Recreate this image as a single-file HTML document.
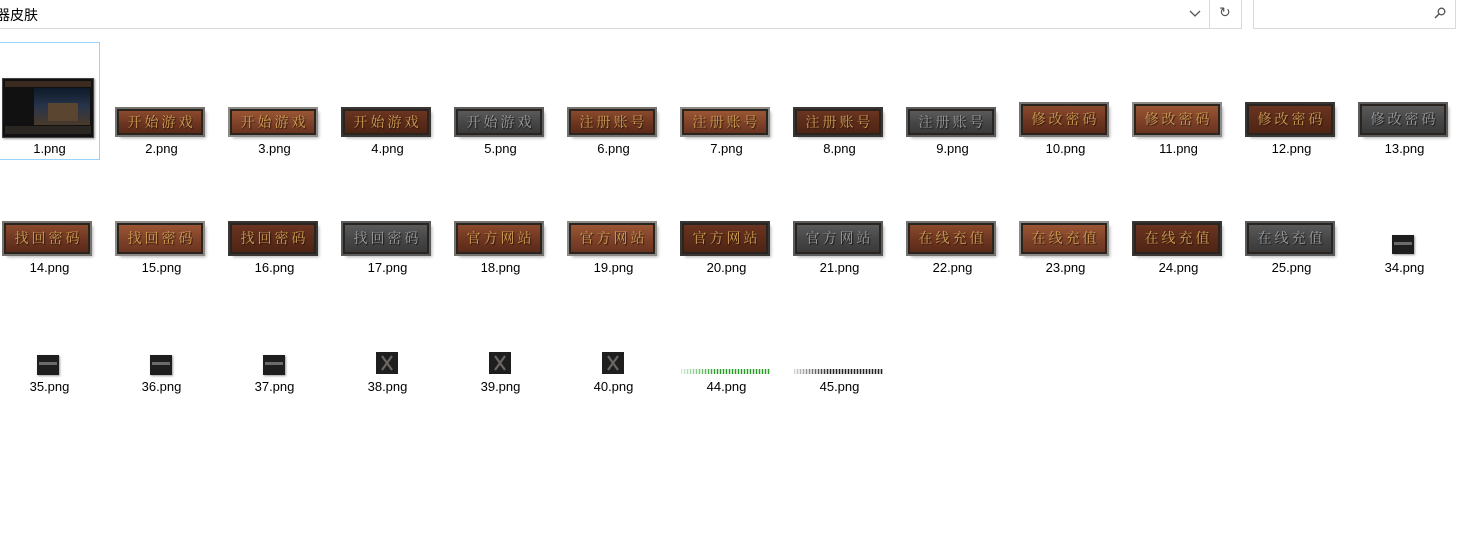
<!DOCTYPE html>
<html><head><meta charset="utf-8"><style>
body{margin:0;width:1461px;height:548px;background:#fff;position:relative;overflow:hidden;font-family:"Liberation Sans","Noto Sans CJK SC",sans-serif;}
.a{position:absolute}
.lbl{position:absolute;width:113px;text-align:center;font-size:13px;color:#000;line-height:14px}
.b{position:absolute;width:86px;box-sizing:border-box;border:2px solid #2a2420;outline:2px solid #76726e;box-shadow:3px 3px 3px rgba(0,0,0,.3);background:linear-gradient(#8a4a2c,#6b3420 60%,#5a2a18);color:#cf9f55;font-family:"Noto Serif CJK SC","Noto Sans CJK SC",serif;font-size:14px;text-align:center;letter-spacing:3px;text-indent:3px;text-shadow:1px 1px 1px #2a1408}
.b.h{background:linear-gradient(#9a5634,#7c4028 60%,#6a3420);outline-color:#8e8a86}
.b.d{background:linear-gradient(#6a3420,#4e2414);outline-color:#3a3634}
.b.g{background:linear-gradient(#5a5a5a,#444 60%,#3a3a3a);color:#9c9c9c;outline-color:#5c5c5c;text-shadow:1px 1px 1px #111}
.sm{position:absolute;width:22px;height:22px;background:#1e1e1e;box-shadow:1px 1px 2px rgba(0,0,0,.4)}
.sm i{position:absolute;left:2px;right:2px;top:9px;height:3px;background:#6a6a6a}
</style></head><body>
<div class="a" style="left:0;top:0;width:1241px;height:28px;border-bottom:1px solid #d9d9d9;border-right:1px solid #d9d9d9"></div>
<div class="a" style="left:-4px;top:5px;font-size:14px">器皮肤</div>
<div class="a" style="left:1209px;top:0;width:1px;height:28px;background:#d9d9d9"></div>
<svg class="a" style="left:1189px;top:10px" width="12" height="8"><path d="M1 1l5 5 5-5" stroke="#555" fill="none" stroke-width="1.3"/></svg>
<div class="a" style="left:1219px;top:4px;font-size:14px;color:#555">↻</div>
<div class="a" style="left:1253px;top:0;height:28px;border:1px solid #d9d9d9;border-top:none;width:201px"></div>
<svg class="a" style="left:1434px;top:7px" width="12" height="13"><circle cx="7.5" cy="4.5" r="3.3" stroke="#555" fill="none" stroke-width="1.3"/><path d="M5 7l-4 4" stroke="#555" stroke-width="1.5"/></svg>

<div class="a" style="left:0;top:42px;width:99px;height:116px;border:1px solid #99d1ff;border-left:none"></div>
<div class="a" style="left:2px;top:78px;width:90px;height:58px;background:#111;border:1px solid #444;box-shadow:1px 1px 2px rgba(0,0,0,.4)">
<div class="a" style="left:2px;top:2px;width:86px;height:6px;background:#3a2a20"></div>
<div class="a" style="left:31px;top:9px;width:56px;height:37px;background:linear-gradient(#0c1a2a,#28344a 50%,#4a3a2a)"></div>
<div class="a" style="left:45px;top:24px;width:30px;height:18px;background:#5a4630"></div>
<div class="a" style="left:2px;top:47px;width:86px;height:8px;background:#2a2622"></div>
</div>
<div class="lbl" style="left:-7px;top:142px">1.png</div>

<div class="b" style="left:117px;top:109px;height:26px;line-height:22px">开始游戏</div><div class="lbl" style="left:105px;top:142px">2.png</div>
<div class="b h" style="left:230px;top:109px;height:26px;line-height:22px">开始游戏</div><div class="lbl" style="left:218px;top:142px">3.png</div>
<div class="b d" style="left:343px;top:109px;height:26px;line-height:22px">开始游戏</div><div class="lbl" style="left:331px;top:142px">4.png</div>
<div class="b g" style="left:456px;top:109px;height:26px;line-height:22px">开始游戏</div><div class="lbl" style="left:444px;top:142px">5.png</div>
<div class="b" style="left:569px;top:109px;height:26px;line-height:22px">注册账号</div><div class="lbl" style="left:557px;top:142px">6.png</div>
<div class="b h" style="left:682px;top:109px;height:26px;line-height:22px">注册账号</div><div class="lbl" style="left:670px;top:142px">7.png</div>
<div class="b d" style="left:795px;top:109px;height:26px;line-height:22px">注册账号</div><div class="lbl" style="left:783px;top:142px">8.png</div>
<div class="b g" style="left:908px;top:109px;height:26px;line-height:22px">注册账号</div><div class="lbl" style="left:896px;top:142px">9.png</div>
<div class="b" style="left:1021px;top:104px;height:31px;line-height:27px">修改密码</div><div class="lbl" style="left:1009px;top:142px">10.png</div>
<div class="b h" style="left:1134px;top:104px;height:31px;line-height:27px">修改密码</div><div class="lbl" style="left:1122px;top:142px">11.png</div>
<div class="b d" style="left:1247px;top:104px;height:31px;line-height:27px">修改密码</div><div class="lbl" style="left:1235px;top:142px">12.png</div>
<div class="b g" style="left:1360px;top:104px;height:31px;line-height:27px">修改密码</div><div class="lbl" style="left:1348px;top:142px">13.png</div>

<div class="b" style="left:4px;top:223px;height:31px;line-height:27px">找回密码</div><div class="lbl" style="left:-7px;top:261px">14.png</div>
<div class="b h" style="left:117px;top:223px;height:31px;line-height:27px">找回密码</div><div class="lbl" style="left:105px;top:261px">15.png</div>
<div class="b d" style="left:230px;top:223px;height:31px;line-height:27px">找回密码</div><div class="lbl" style="left:218px;top:261px">16.png</div>
<div class="b g" style="left:343px;top:223px;height:31px;line-height:27px">找回密码</div><div class="lbl" style="left:331px;top:261px">17.png</div>
<div class="b" style="left:456px;top:223px;height:31px;line-height:27px">官方网站</div><div class="lbl" style="left:444px;top:261px">18.png</div>
<div class="b h" style="left:569px;top:223px;height:31px;line-height:27px">官方网站</div><div class="lbl" style="left:557px;top:261px">19.png</div>
<div class="b d" style="left:682px;top:223px;height:31px;line-height:27px">官方网站</div><div class="lbl" style="left:670px;top:261px">20.png</div>
<div class="b g" style="left:795px;top:223px;height:31px;line-height:27px">官方网站</div><div class="lbl" style="left:783px;top:261px">21.png</div>
<div class="b" style="left:908px;top:223px;height:31px;line-height:27px">在线充值</div><div class="lbl" style="left:896px;top:261px">22.png</div>
<div class="b h" style="left:1021px;top:223px;height:31px;line-height:27px">在线充值</div><div class="lbl" style="left:1009px;top:261px">23.png</div>
<div class="b d" style="left:1134px;top:223px;height:31px;line-height:27px">在线充值</div><div class="lbl" style="left:1122px;top:261px">24.png</div>
<div class="b g" style="left:1247px;top:223px;height:31px;line-height:27px">在线充值</div><div class="lbl" style="left:1235px;top:261px">25.png</div>
<div class="sm" style="left:1392px;top:235px;height:19px"><i style="top:7px"></i></div><div class="lbl" style="left:1348px;top:261px">34.png</div>

<div class="sm" style="left:37px;top:355px;height:20px"><i style="top:7px"></i></div><div class="lbl" style="left:-7px;top:380px">35.png</div>
<div class="sm" style="left:150px;top:355px;height:20px"><i style="top:7px"></i></div><div class="lbl" style="left:105px;top:380px">36.png</div>
<div class="sm" style="left:263px;top:355px;height:20px"><i style="top:7px"></i></div><div class="lbl" style="left:218px;top:380px">37.png</div>
<svg class="a" style="left:376px;top:352px" width="23" height="23"><rect width="22" height="22" fill="#1e1e1e"/><path d="M6 4l10 14M16 4L6 18" stroke="#6a6664" stroke-width="2.2"/></svg><div class="lbl" style="left:331px;top:380px">38.png</div>
<svg class="a" style="left:489px;top:352px" width="23" height="23"><rect width="22" height="22" fill="#1e1e1e"/><path d="M6 4l10 14M16 4L6 18" stroke="#6a6664" stroke-width="2.2"/></svg><div class="lbl" style="left:444px;top:380px">39.png</div>
<svg class="a" style="left:602px;top:352px" width="23" height="23"><rect width="22" height="22" fill="#1e1e1e"/><path d="M6 4l10 14M16 4L6 18" stroke="#6a6664" stroke-width="2.2"/></svg><div class="lbl" style="left:557px;top:380px">40.png</div>
<div class="a" style="left:681px;top:369px;width:89px;height:5px;background:repeating-linear-gradient(90deg,#2a9a2a 0 1px,#c8e8c8 1px 3px);-webkit-mask:linear-gradient(90deg,rgba(0,0,0,.2),#000 40%)"></div><div class="lbl" style="left:670px;top:380px">44.png</div>
<div class="a" style="left:794px;top:369px;width:89px;height:5px;background:repeating-linear-gradient(90deg,#222 0 1px,#bbb 1px 3px);-webkit-mask:linear-gradient(90deg,rgba(0,0,0,.2),#000 40%)"></div><div class="lbl" style="left:783px;top:380px">45.png</div>
</body></html>
